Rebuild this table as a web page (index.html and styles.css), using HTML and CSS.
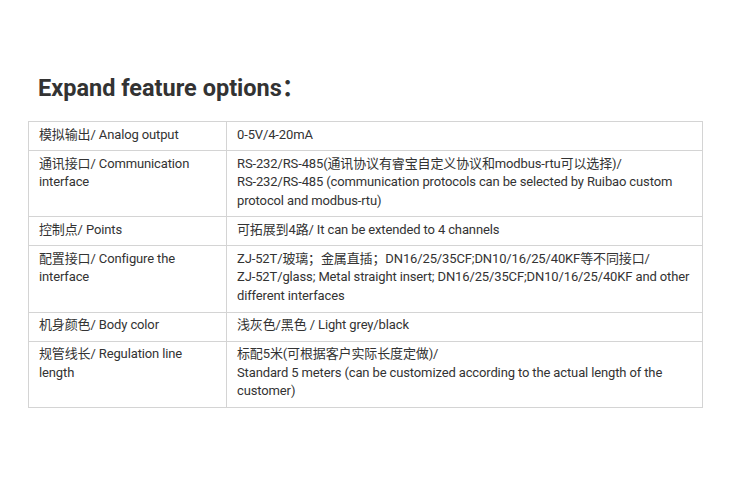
FILE: index.html
```html
<!DOCTYPE html>
<html>
<head>
<meta charset="utf-8">
<link rel="stylesheet" href="styles.css">
</head>
<body>
<div class="page">
  <h2 class="title">Expand feature options：</h2>
  <table class="spec">
    <tr><td class="k">模拟输出/ Analog output</td><td class="v">0-5V/4-20mA</td></tr>
    <tr><td class="k">通讯接口/ Communication interface</td><td class="v">RS-232/RS-485(通讯协议有睿宝自定义协议和modbus-rtu可以选择)/<br>RS-232/RS-485 (communication protocols can be selected by Ruibao custom protocol and modbus-rtu)</td></tr>
    <tr><td class="k">控制点/ Points</td><td class="v">可拓展到4路/ It can be extended to 4 channels</td></tr>
    <tr><td class="k">配置接口/ Configure the interface</td><td class="v">ZJ-52T/玻璃；金属直插；DN16/25/35CF;DN10/16/25/40KF等不同接口/<br>ZJ-52T/glass; Metal straight insert; DN16/25/35CF;DN10/16/25/40KF and other different interfaces</td></tr>
    <tr><td class="k">机身颜色/ Body color</td><td class="v">浅灰色/黑色 / Light grey/black</td></tr>
    <tr><td class="k">规管线长/ Regulation line length</td><td class="v">标配5米(可根据客户实际长度定做)/<br>Standard 5 meters (can be customized according to the actual length of the customer)</td></tr>
  </table>
</div>
</body>
</html>
```

FILE: styles.css
```css
html, body {
  margin: 0;
  padding: 0;
  background: #fff;
}
.page {
  padding: 73px 52px 0 28px;
  font-family: Roboto, "Noto Sans CJK SC", sans-serif;
  color: #333;
}
.title {
  margin: 0 0 18px 10px;
  font-size: 23.5px;
  line-height: 30px;
  font-weight: 700;
  color: #333;
}
.spec {
  width: 675px;
  border-collapse: collapse;
  font-size: 13px;
  line-height: 18.57px;
  letter-spacing: -0.13px;
}
.spec td {
  border: 1px solid #d4d4d4;
  padding: 3.5px 10px 6px 10px;
  vertical-align: top;
}
.spec .k {
  width: 177px;
}
```
